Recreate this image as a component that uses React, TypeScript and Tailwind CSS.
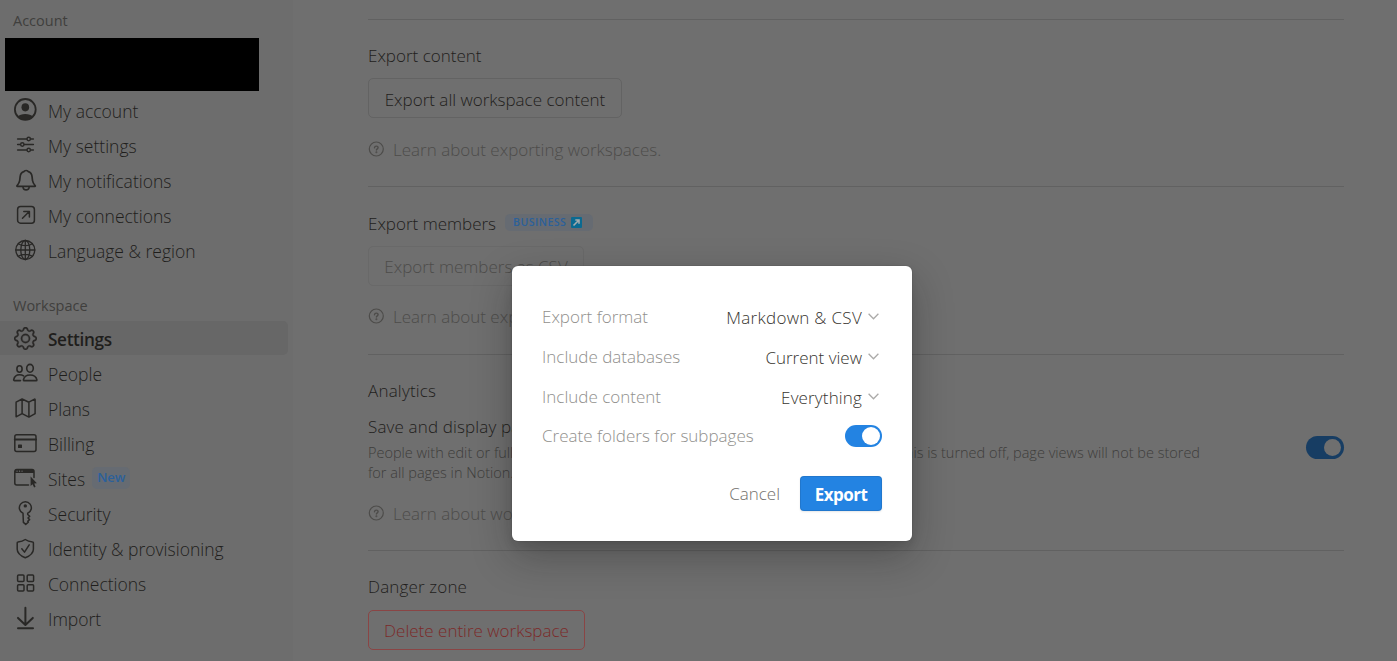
import type { ReactNode } from 'react';
import { BsGear } from 'react-icons/bs';

function Glyph({ children, w = 1.6 }: { children: ReactNode; w?: number }) {
  return (
    <svg
      className="size-6 shrink-0 overflow-visible text-[#292826]"
      viewBox="0 0 24 24"
      fill="none"
      stroke="currentColor"
      strokeWidth={w}
      strokeLinecap="round"
      strokeLinejoin="round"
    >
      {children}
    </svg>
  );
}

const AccountIcon = () => (
  <Glyph w={1.8}>
    <circle cx="12.3" cy="11.4" r="10.4" />
    <ellipse cx="12.3" cy="9.3" rx="3.8" ry="4.1" fill="currentColor" stroke="none" />
    <path d="M4.6 18.6c1.6-1.7 4.4-2.6 7.7-2.6s6.1.9 7.7 2.6c-1.8 2.1-4.6 3.2-7.7 3.2s-5.9-1.1-7.7-3.2z" fill="currentColor" stroke="none" />
  </Glyph>
);

const SlidersIcon = () => (
  <Glyph w={1.4}>
    <path d="M4.6 6h9.2M17.6 6h2.8M4.6 11.5h2.8M11.2 11.5h9.2M4.6 17h9.2M17.6 17h2.8" />
    <circle cx="15.7" cy="6" r="1.7" />
    <circle cx="9.3" cy="11.5" r="1.7" />
    <circle cx="15.7" cy="17" r="1.7" />
  </Glyph>
);

const BellIcon = () => (
  <Glyph w={1.7}>
    <path d="M4.3 18.4c-.4 0-.5-.4-.3-.7 1.2-1.5 2.5-3.2 2.7-5.2l.4-3.6c.3-2.9 1.7-4.7 3.8-5.2.3-.8.9-1.2 2.2-1.2s1.9.4 2.2 1.2c2.1.5 3.5 2.3 3.8 5.2l.4 3.6c.2 2 1.5 3.7 2.7 5.2.2.3.1.7-.3.7z" />
    <path d="M10.1 19.6c.3 1.4 1.4 2.3 3 2.3s2.700-.9 3-2.300" />
  </Glyph>
);

const ConnectionIcon = () => (
  <Glyph w={1.5}>
    <rect x="4.6" y="3.4" width="16.8" height="16.8" rx="3" />
    <path d="M9.5 15.300l6.800-6.800M10.800 8.400h5.600v5.600" />
  </Glyph>
);

const GlobeIcon = () => (
  <Glyph w={1.3}>
    <circle cx="12.3" cy="12" r="9.5" />
    <ellipse cx="12.3" cy="12" rx="4.5" ry="9.5" />
    <path d="M12.3 2.5v19M2.8 12h19M5.3 5.7c1.7 1.3 4.3 2 7 2s5.3-.7 7-2M5.3 18.3c1.7-1.3 4.3-2 7-2s5.3.7 7 2" />
  </Glyph>
);

const GearIcon = () => (
  <span className="flex size-6 shrink-0 items-center justify-center text-[#292826]">
    <BsGear className="size-[23px]" strokeWidth={0.25} />
  </span>
);

const PeopleIcon = () => (
  <Glyph>
    <ellipse cx="6.5" cy="8" rx="2.6" ry="3.2" />
    <ellipse cx="17" cy="7.3" rx="3.3" ry="3.9" />
    <path d="M10.4 18.9c.5-2.8 3.2-4.9 6.7-4.9s6.2 2.1 6.8 4.9c0 .5-.3.7-.8.7H11.2c-.5 0-.8-.2-.8-.7z" />
    <path d="M10.6 14.800c-1.100-.7-2.500-1.100-4-1.100C3.600 13.700 1.300 15.700.7 18.600c-.1.600.2 1 .8 1h6" />
  </Glyph>
);

const MapIcon = () => (
  <Glyph w={1.5}>
    <path d="M3.1 6.200l6-3.200 6.800 3.200 5.600-3c.3-.2.6 0 .6.3v14.200l-6.200 3.400-6.800-3.400-5.600 3c-.3.2-.4 0-.4-.3zM9.100 3v14.700M15.900 6.200v14.900" />
  </Glyph>
);

const CardIcon = () => (
  <Glyph w={1.5}>
    <rect x="1.8" y="3.8" width="21.2" height="16.6" rx="2" />
    <path d="M1.8 8.6h21.2" strokeWidth="2" />
    <rect x="5" y="13.4" width="4" height="3.6" rx=".6" fill="currentColor" stroke="none" />
  </Glyph>
);

const BrowserIcon = () => (
  <Glyph w={1.5}>
    <path d="M15.500 18.900H3.800a2 2 0 0 1-2-2V5.500a2 2 0 0 1 2-2h15.200a2 2 0 0 1 2 2v6" />
    <path d="M1.800 6.900V5.300a2 2 0 0 1 2-2h15.200a2 2 0 0 1 2 2v1.600z" fill="currentColor" stroke="none" />
    <path d="M4 5.200h.1M6.500 5.200h.1M9 5.200h.1" stroke="#6d6d6d" strokeWidth="1.2" />
    <path d="M17.600 10.600v9.300l2-1.700 1.500 3.200 1.500-.7-1.400-3.100 2.700-.3z" fill="currentColor" stroke="none" />
  </Glyph>
);

const KeyIcon = () => (
  <Glyph w={1.5}>
    <path d="M10 12.300a6 6 0 1 1 4.700 0v1.200l2 1.700-1.700 1.800 1.600 1.600-1.900 1.600.6 1-2.600 2.200-2.300-2z" />
    <circle cx="12.3" cy="4.9" r="1.7" fill="currentColor" stroke="none" />
  </Glyph>
);

const ShieldIcon = () => (
  <Glyph w={1.5}>
    <path d="M12.300 3.500c2.200 1.600 4.700 2.200 7.300 2.400.5 0 .8.3.8.8v6.600c0 4.300-3.300 6.500-8.100 8.500-4.800-2-8.100-4.200-8.100-8.500V6.700c0-.5.3-.8.8-.8 2.600-.2 5.100-.8 7.300-2.400z" />
    <path d="M8.800 12.800l2.700 3.300 4.700-7.300" />
  </Glyph>
);

const GridIcon = () => (
  <Glyph w={1.5}>
    <rect x="4.6" y="4.1" width="6.4" height="6.4" rx="1" />
    <rect x="14.2" y="4.1" width="6.4" height="6.4" rx="1" />
    <rect x="4.6" y="13.7" width="6.4" height="6.4" rx="1" />
    <rect x="14.2" y="13.7" width="6.4" height="6.4" rx="1" />
  </Glyph>
);

const ImportIcon = () => (
  <Glyph w={2}>
    <path d="M12.400 1.700v16.800M5 11.900l7.400 7 7.400-7M5 22.200h15" />
  </Glyph>
);

type Item = { label: string; icon: () => ReactNode; active?: boolean; badge?: string };

const accountItems: Item[] = [
  { label: 'My account', icon: AccountIcon },
  { label: 'My settings', icon: SlidersIcon },
  { label: 'My notifications', icon: BellIcon },
  { label: 'My connections', icon: ConnectionIcon },
  { label: 'Language & region', icon: GlobeIcon },
];

const workspaceItems: Item[] = [
  { label: 'Settings', icon: GearIcon, active: true },
  { label: 'People', icon: PeopleIcon },
  { label: 'Plans', icon: MapIcon },
  { label: 'Billing', icon: CardIcon },
  { label: 'Sites', icon: BrowserIcon, badge: 'New' },
  { label: 'Security', icon: KeyIcon },
  { label: 'Identity & provisioning', icon: ShieldIcon },
  { label: 'Connections', icon: GridIcon },
  { label: 'Import', icon: ImportIcon },
];

function NavList({ items, className = '' }: { items: Item[]; className?: string }) {
  return (
    <ul className={`flex flex-col gap-px ${className}`}>
      {items.map(({ label, icon: Icon, active, badge }) => (
        <li
          key={label}
          className={`mr-[5px] flex h-[34px] items-center rounded-r-[5px] pl-[13px] ${active ? 'bg-[#676767]' : ''}`}
        >
          <Icon />
          <span
            className={`ml-[11px] leading-6 ${active ? 'pt-[3px] text-[17.2px] font-semibold tracking-[-0.35px]' : 'pt-px text-[17.5px] font-[350]'}`}
          >
            {label}
          </span>
          {badge && (
            <span className="ml-[7px] flex h-[22px] items-center rounded-[5px] bg-[#666b72] px-[5px] text-[13px] font-semibold text-[#2b609a]">
              {badge}
            </span>
          )}
        </li>
      ))}
    </ul>
  );
}

function Help({ children }: { children: ReactNode }) {
  return (
    <div className="flex h-6 items-center gap-[9px] text-[17px] font-[350] text-[#4d4c4a]">
      <svg className="-mt-0.5 size-4 shrink-0" viewBox="0 0 16 16" fill="none" stroke="currentColor" strokeWidth="1.2" strokeLinecap="round">
        <circle cx="8.300" cy="8" r="7" />
        <path d="M6.500 6.700c.1-1 .8-1.600 1.800-1.600s1.800.6 1.800 1.500c0 1.200-1.700 1.300-1.700 2.500" strokeWidth="1.4" />
        <circle cx="8.400" cy="11.200" r=".4" />
      </svg>
      <span>{children}</span>
    </div>
  );
}

const Chevron = () => (
  <svg className="mr-[3px] mb-[3px] ml-[6px] h-[7px] w-[11px]" viewBox="0 0 11 7" fill="none" stroke="#acaba9" strokeWidth="1.3">
    <path d="M.6.8l4.900 5 4.900-5" />
  </svg>
);

const options = [
  { label: 'Export format', value: 'Markdown & CSV', spacing: 'tracking-[0.3px]' },
  { label: 'Include databases', value: 'Current view', spacing: 'tracking-normal' },
  { label: 'Include content', value: 'Everything', spacing: 'tracking-[0.15px]' },
];

function ExportDialog() {
  return (
    <div className="absolute top-[266px] left-[512px] flex h-[275px] w-[400px] flex-col rounded-[6px] bg-white px-[30px] pt-[31px] text-[17px] font-[340] shadow-[0_0_0_1px_rgba(15,15,15,0.05),0_5px_10px_rgba(15,15,15,0.1),0_15px_40px_rgba(15,15,15,0.3)]">
      {options.map(({ label, value, spacing }) => (
        <div key={label} className="flex h-10 items-center justify-between">
          <span className="text-[#91908d]">{label}</span>
          <span className={`flex items-center pt-px text-[#37352f] ${spacing}`}>
            {value}
            <Chevron />
          </span>
        </div>
      ))}
      <div className="flex h-[38px] items-center justify-between">
        <span className="text-[#91908d]">Create folders for subpages</span>
        <span className="flex h-[22px] w-[37px] items-center justify-end rounded-full bg-[#2383e2] p-[2px]">
          <span className="size-[18px] rounded-full bg-white" />
        </span>
      </div>
      <div className="mt-[21px] flex items-center justify-end gap-5">
        <button className="pt-px text-[#72706c]">Cancel</button>
        <button className="h-[35px] w-[82px] rounded-[4px] bg-[#2383e2] pt-[2px] font-bold tracking-[-0.5px] text-white shadow-[inset_0_0_0_1px_rgba(15,15,15,0.1),0_1px_2px_rgba(15,15,15,0.1)]">
          Export
        </button>
      </div>
    </div>
  );
}

export default function App() {
  return (
    <div className="relative flex h-[661px] w-full overflow-hidden bg-[#6f6f6f] font-['Open_Sans',sans-serif] whitespace-nowrap text-[#1f1e1c]">
      <aside className="flex w-[293px] shrink-0 flex-col bg-[#6d6d6d]">
        <h2 className="mt-[11px] h-5 pl-[13px] text-[14.5px] leading-5 font-medium text-[#403f3d]">Account</h2>
        <div className="mt-[7px] mb-[2px] ml-[5px] h-[53px] w-[254px] bg-black" />
        <NavList items={accountItems} />
        <h2 className="mt-[29px] mb-[5px] h-5 pl-[13px] text-[14.5px] leading-5 font-medium text-[#403f3d]">Workspace</h2>
        <NavList items={workspaceItems} />
      </aside>

      <main className="ml-[75px] flex w-[976px] flex-col text-[17px] leading-6 font-[350]">
        <section className="mt-[19px] h-[167px] border-t border-[#616161] pt-6">
          <h3>Export content</h3>
          <button className="mt-[10px] h-10 w-[254px] rounded-[5px] border border-[#636363] pt-[3px]">Export all workspace content</button>
          <div className="mt-[20px]"><Help>Learn about exporting workspaces.</Help></div>
        </section>

        <section className="h-[168px] border-t border-[#616161] pt-[25px]">
          <div className="flex h-6 items-center">
            <h3>Export members</h3>
            <span className="mb-1 ml-[9px] flex h-[17px] w-[88px] items-center rounded-[5px] bg-[#666b72] pl-2 text-[10.5px] font-semibold tracking-[0.5px] text-[#2b609a]">
              BUSINESS
              <svg className="ml-[5px] size-[11px]" viewBox="0 0 11 11">
                <rect width="11" height="11" rx="1" fill="#0b6a91" />
                <path d="M2.500 8.500l5-5M4.300 3h3.700v3.700" fill="none" stroke="#a3abad" strokeWidth="1.600" />
              </svg>
            </span>
          </div>
          <button className="mt-[10px] h-10 w-[216px] rounded-[5px] border border-[#696969] pt-[2px] text-[#4d4c4a]">Export members as CSV</button>
          <div className="mt-[19px]"><Help>Learn about exporting members.</Help></div>
        </section>

        <section className="h-[196px] border-t border-[#616161] pt-6">
          <h3 className="tracking-[0.2px]">Analytics</h3>
          <div className="mt-3 flex h-[68px] justify-between">
            <div>
              <h4 className="tracking-[0.15px]">Save and display page view analytics</h4>
              <div className="mt-[4px] flex w-[832px] flex-col text-[14.5px] leading-5 text-[#3e3d3b]">
                <p className="flex justify-between">
                  <span>People with edit or full access can see page views.</span>
                  <span>When this is turned off, page views will not be stored</span>
                </p>
                <p>for all pages in Notion.</p>
              </div>
            </div>
            <span className="mt-[21px] flex h-[23px] w-[38px] items-center justify-end rounded-full bg-[#173d63] p-[3px]">
              <span className="size-[17px] rounded-full bg-[#6f6f6f]" />
            </span>
          </div>
          <div className="mt-[19px]"><Help>Learn about workspace analytics.</Help></div>
        </section>

        <section className="border-t border-[#616161] pt-6">
          <h3 className="tracking-[0.15px]">Danger zone</h3>
          <button className="mt-[11px] h-10 w-[217px] rounded-[5px] border border-[#8a4545] pt-[2px] text-[#7c2a29]">Delete entire workspace</button>
        </section>
      </main>

      <ExportDialog />
    </div>
  );
}
